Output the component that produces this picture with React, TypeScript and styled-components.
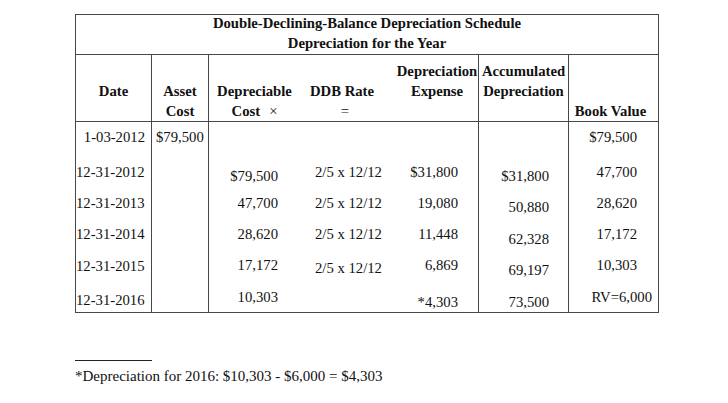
import React from 'react';
import styled, { createGlobalStyle } from 'styled-components';

const LINE = '#474747';

const GlobalStyle = createGlobalStyle`
  html, body {
    margin: 0;
    padding: 0;
    background: #ffffff;
  }
  body {
    font-family: "Liberation Serif", "Times New Roman", serif;
    color: #111111;
  }
`;

const Page = styled.div`
  padding: 14px 0 0 75px;
  width: 728px;
  height: 403px;
  box-sizing: border-box;
`;

const Schedule = styled.div`
  display: grid;
  width: 584px;
  box-sizing: border-box;
  grid-template-columns: 76px 57px 91px 88px 91px 90px 89px;
  grid-template-rows: 40px 67px 31px 31px 31px 31px 31px 35px;
  border: 1px solid ${LINE};
  font-size: 14.7px;
`;

const TitleCell = styled.div`
  grid-column: 1 / -1;
  display: flex;
  flex-direction: column;
  justify-content: center;
  padding-bottom: 4px;
  box-sizing: border-box;
  border-bottom: 1px solid ${LINE};
  text-align: center;
  font-weight: bold;
  line-height: 20px;
  overflow: visible;
`;

const HeadCell = styled.div<{ $skip: number; $divider?: boolean; $nudge?: number }>`
  box-sizing: border-box;
  padding-top: ${(p) => 6 + p.$skip * 20}px;
  padding-left: ${(p) => Math.max(p.$nudge ?? 0, 0)}px;
  padding-right: ${(p) => Math.max(-(p.$nudge ?? 0), 0)}px;
  border-bottom: 1px solid ${LINE};
  border-right: ${(p) => (p.$divider ? `1px solid ${LINE}` : 'none')};
  text-align: center;
  font-weight: bold;
  line-height: 20px;
  white-space: nowrap;
`;

const Operator = styled.span<{ $gap?: number }>`
  font-weight: normal;
  margin-left: ${(p) => p.$gap ?? 0}px;
`;

const DataCell = styled.div<{
  $y: number;
  $align: 'left' | 'right';
  $pl: number;
  $pr: number;
  $divider?: boolean;
}>`
  box-sizing: border-box;
  padding: ${(p) => p.$y - 8}px ${(p) => p.$pr}px 0 ${(p) => p.$pl}px;
  border-right: ${(p) => (p.$divider ? `1px solid ${LINE}` : 'none')};
  text-align: ${(p) => p.$align};
  line-height: 16px;
  white-space: nowrap;
`;

const Footnote = styled.div`
  margin-top: 47px;
  font-size: 15px;
`;

const FootRule = styled.div`
  width: 77px;
  border-top: 1px solid #222;
`;

const FootText = styled.div`
  margin-top: 6px;
  line-height: 18px;
`;

type Col = { align: 'left' | 'right'; pl: number; pr: number; divider?: boolean };

const cols: Col[] = [
  { align: 'left', pl: 0, pr: 0, divider: true },
  { align: 'left', pl: 4, pr: 0, divider: true },
  { align: 'right', pl: 0, pr: 22 },
  { align: 'left', pl: 15, pr: 0 },
  { align: 'right', pl: 0, pr: 20, divider: true },
  { align: 'right', pl: 0, pr: 19, divider: true },
  { align: 'right', pl: 0, pr: 21 },
];

type Cell = { t?: string; y?: number; align?: 'left' | 'right'; pr?: number };

const rate = '2/5 x 12/12';

const rows: Cell[][] = [
  [{ t: '1-03-2012', y: 15, align: 'right', pr: 6 }, { t: '$79,500', y: 15 }, {}, {}, {}, {}, { t: '$79,500', y: 15 }],
  [{ t: '12-31-2012', y: 19 }, {}, { t: '$79,500', y: 23 }, { t: rate, y: 19 }, { t: '$31,800', y: 19 }, { t: '$31,800', y: 23 }, { t: '47,700', y: 19 }],
  [{ t: '12-31-2013', y: 19 }, {}, { t: '47,700', y: 19 }, { t: rate, y: 19 }, { t: '19,080', y: 19 }, { t: '50,880', y: 23 }, { t: '28,620', y: 19 }],
  [{ t: '12-31-2014', y: 19 }, {}, { t: '28,620', y: 19 }, { t: rate, y: 19 }, { t: '11,448', y: 19 }, { t: '62,328', y: 24 }, { t: '17,172', y: 19 }],
  [{ t: '12-31-2015', y: 20 }, {}, { t: '17,172', y: 19 }, { t: rate, y: 22 }, { t: '6,869', y: 19 }, { t: '69,197', y: 24 }, { t: '10,303', y: 19 }],
  [{ t: '12-31-2016', y: 23 }, {}, { t: '10,303', y: 20 }, {}, { t: '*4,303', y: 25 }, { t: '73,500', y: 25 }, { t: 'RV=6,000', y: 20, pr: 6 }],
];

export default function App() {
  return (
    <>
      <GlobalStyle />
      <Page>
        <Schedule>
          <TitleCell>
            <div>Double-Declining-Balance Depreciation Schedule</div>
            <div>Depreciation for the Year</div>
          </TitleCell>

          <HeadCell $skip={1} $divider>Date</HeadCell>
          <HeadCell $skip={1} $divider>
            Asset
            <br />
            Cost
          </HeadCell>
          <HeadCell $skip={1}>
            Depreciable
            <br />
            Cost<Operator $gap={9}>×</Operator>
          </HeadCell>
          <HeadCell $skip={1} $nudge={-4}>
            DDB Rate
            <br />
            <Operator $gap={6}>=</Operator>
          </HeadCell>
          <HeadCell $skip={0} $divider $nudge={8}>
            Depreciation
            <br />
            Expense
          </HeadCell>
          <HeadCell $skip={0} $divider>
            Accumulated
            <br />
            Depreciation
          </HeadCell>
          <HeadCell $skip={2} $nudge={-6}>Book Value</HeadCell>

          {rows.map((row, r) =>
            row.map((cell, c) => {
              const col = cols[c];
              return (
                <DataCell
                  key={`${r}-${c}`}
                  $y={cell.y ?? 16}
                  $align={cell.align ?? col.align}
                  $pl={col.pl}
                  $pr={cell.pr ?? col.pr}
                  $divider={col.divider}
                >
                  {cell.t ?? ''}
                </DataCell>
              );
            })
          )}
        </Schedule>

        <Footnote>
          <FootRule />
          <FootText>*Depreciation for 2016: $10,303 - $6,000 = $4,303</FootText>
        </Footnote>
      </Page>
    </>
  );
}
